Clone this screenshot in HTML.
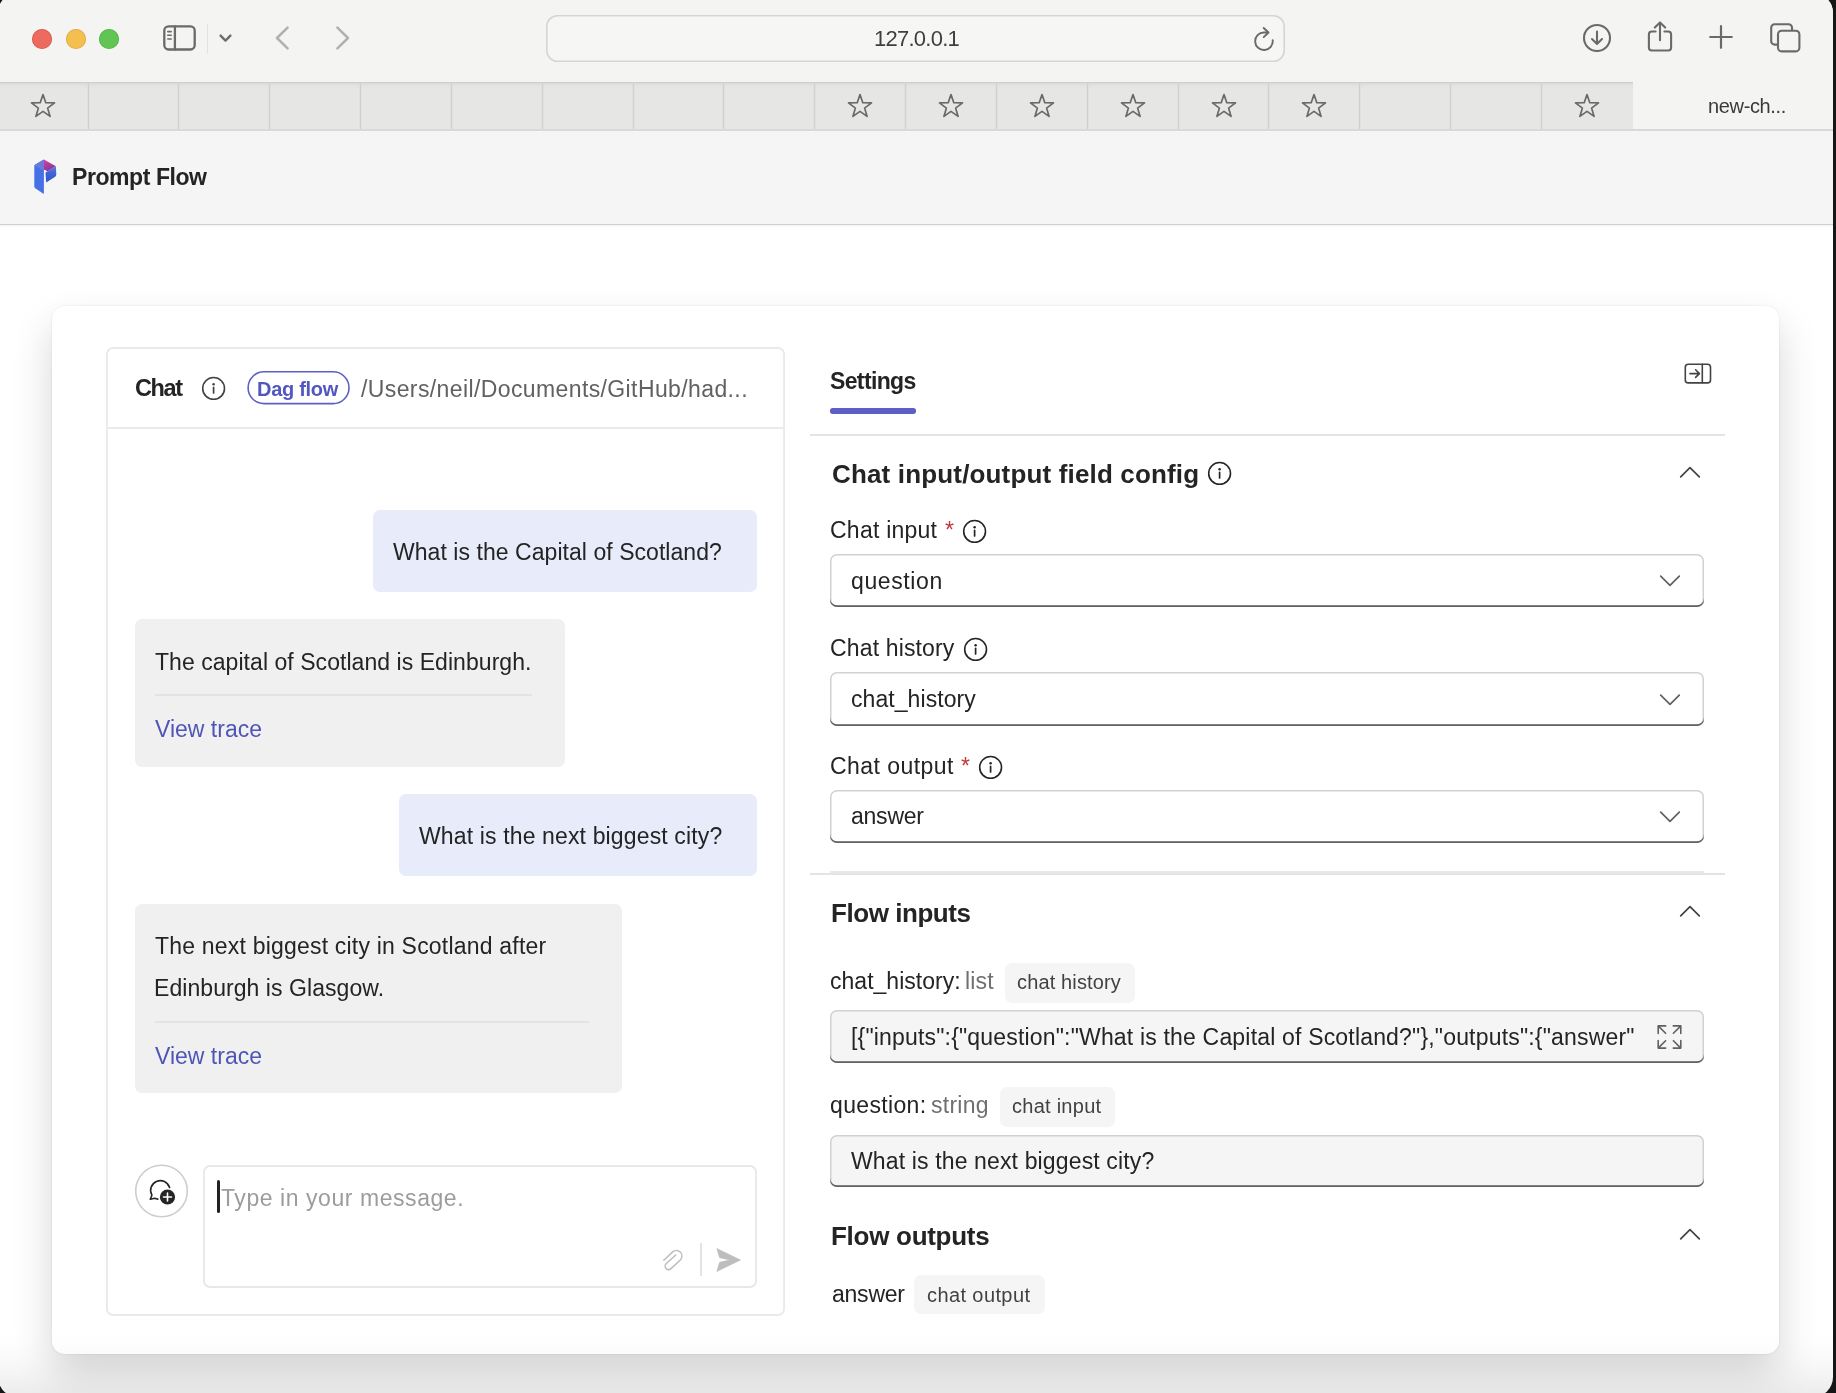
<!DOCTYPE html>
<html lang="en">
<head>
<meta charset="utf-8">
<title>new-chat</title>
<style>
*{box-sizing:border-box;margin:0;padding:0}
html,body{width:1836px;height:1393px;overflow:hidden;background:#161616}
body{font-family:"Liberation Sans",sans-serif;color:#242424;position:relative}
.abs{position:absolute}
#win{position:absolute;left:-2px;top:-7px;width:1834.6px;height:1404px;border-radius:20px;overflow:hidden;background:#fff}
#winin{position:absolute;left:2px;top:7px;width:1836px;height:1393px}
#toolbar{position:absolute;left:0;top:0;width:1836px;height:83px;background:#f4f4f2}
#tabbar{position:absolute;left:0;top:82px;width:1836px;height:49px;background:linear-gradient(#d9d9d8 0,#e2e2e1 2px,#e6e6e5 5px);border-top:1px solid #cecece;border-bottom:2px solid #d9d9d8}
.tsep{position:absolute;top:0;width:1px;height:46px;background:#d0d0cf;box-shadow:0 0 0 .3px #d8d8d7}
#acttab{position:absolute;left:1632.5px;top:-1.5px;width:210px;height:47.5px;background:#f4f4f2}
#apphead{position:absolute;left:0;top:131px;width:1836px;height:94px;background:#f5f5f5;border-bottom:1.6px solid #cfcfcf;box-shadow:0 1px 2px rgba(0,0,0,.06)}
.t{position:absolute;white-space:pre;line-height:30px;font-size:23px;will-change:transform}
.b{font-weight:700}
svg{position:absolute;overflow:visible}

#card{position:absolute;left:52px;top:305.5px;width:1727px;height:1048.5px;border-radius:13px;background:#fff;box-shadow:0 0 3px rgba(0,0,0,.08),0 20px 40px rgba(0,0,0,.16)}
#chat{position:absolute;left:106px;top:347px;width:679.2px;height:969.4px;box-shadow:inset 0 0 0 1.9px #eaeaea;border-radius:7px;background:#fff}
.bub{position:absolute;border-radius:7px}
.bub.u{background:#e8ebfa}
.bub.a{background:#f0f0f0}
.lk{color:#4f55b5}
.hr{position:absolute;height:2px;background:#e4e4e4}
.sel,.inp{position:absolute;left:830px;width:874px;height:53.6px;box-shadow:inset 0 -1.8px 0 0 #616161,inset 0 0 0 1.5px #d1d1d1;border-radius:7px;background:#fff}
.inp{background:#f5f5f5;height:52.6px}
.bdg{position:absolute;border-radius:7px;background:#f5f5f5}
.t.s{font-size:20px;color:#424242}
</style>
</head>
<body>
<div id="win"><div id="winin">

<!-- ======= Safari toolbar ======= -->
<div id="toolbar">
  <div class="abs" style="left:32px;top:29px;width:20px;height:20px;border-radius:50%;background:#ec6a5e;box-shadow:inset 0 0 0 .8px rgba(180,60,50,.45)"></div>
  <div class="abs" style="left:65.6px;top:29px;width:20px;height:20px;border-radius:50%;background:#f4bf4f;box-shadow:inset 0 0 0 .8px rgba(190,140,40,.45)"></div>
  <div class="abs" style="left:99.2px;top:29px;width:20px;height:20px;border-radius:50%;background:#61c554;box-shadow:inset 0 0 0 .8px rgba(60,150,50,.45)"></div>
  <!-- sidebar icon -->
  <svg style="left:163px;top:25px" width="33" height="26" viewBox="0 0 33 26" fill="none" stroke="#6a6a6a" stroke-width="2.3" stroke-linecap="round">
    <rect x="1.3" y="1.3" width="30.4" height="23.2" rx="4.2"/>
    <path d="M11.9 1.4V24.6" />
    <path d="M4.8 6.6H8.2M4.8 10.3H8.2M4.8 14H8.2" stroke-width="1.6"/>
  </svg>
  <div class="abs" style="left:207px;top:24px;width:1.4px;height:29.5px;background:#e3e3e1"></div>
  <svg style="left:219px;top:34px" width="13" height="9" viewBox="0 0 13 9" fill="none" stroke="#6e6e6e" stroke-width="2.4" stroke-linecap="round" stroke-linejoin="round"><path d="M1.6 1.6L6.5 6.6L11.4 1.6"/></svg>
  <svg style="left:275px;top:26px" width="15" height="24" viewBox="0 0 15 24" fill="none" stroke="#b0b0ae" stroke-width="2.5" stroke-linecap="round" stroke-linejoin="round"><path d="M12.6 1.6L2 12L12.6 22.4"/></svg>
  <svg style="left:335px;top:26px" width="15" height="24" viewBox="0 0 15 24" fill="none" stroke="#b0b0ae" stroke-width="2.5" stroke-linecap="round" stroke-linejoin="round"><path d="M2.4 1.6L13 12L2.4 22.4"/></svg>
  <!-- URL field -->
  <div class="abs" style="left:546px;top:15px;width:739px;height:47px;box-shadow:inset 0 0 0 1.6px #d5d5d3;border-radius:11.5px;background:#f6f6f5"></div>
  <div class="t" style="left:874.4px;top:24px;font-size:22px;letter-spacing:-.75px;color:#3f3f3f">127.0.0.1</div>
  <!-- reload -->
  <svg style="left:1252px;top:27px" width="24" height="26" viewBox="0 0 24 26" fill="none" stroke="#6a6a6a" stroke-width="1.9" stroke-linecap="round" stroke-linejoin="round">
    <path d="M20.7 13.3A8.8 8.8 0 1 1 11.9 5.45H16"/>
    <path d="M11.7 1L16.5 5.45L11.7 10.1"/>
  </svg>
  <!-- download -->
  <svg style="left:1582px;top:23px" width="30" height="30" viewBox="0 0 30 30" fill="none" stroke="#6a6a6a" stroke-width="2.1" stroke-linecap="round" stroke-linejoin="round">
    <circle cx="15" cy="15" r="13"/>
    <path d="M15 8.6V20.8M10 16L15 21L20 16"/>
  </svg>
  <!-- share -->
  <svg style="left:1646px;top:19px" width="28" height="34" viewBox="0 0 28 34" fill="none" stroke="#6a6a6a" stroke-width="2.1" stroke-linecap="round" stroke-linejoin="round">
    <path d="M9.6 12.5H5.8a2.9 2.9 0 0 0-2.9 2.9V28.6a2.9 2.9 0 0 0 2.9 2.9H22.2a2.9 2.9 0 0 0 2.9-2.9V15.4a2.9 2.9 0 0 0-2.9-2.9H18.4"/>
    <path d="M14 21.2V3.8M8.8 8.6L14 3.4L19.2 8.6"/>
  </svg>
  <!-- plus -->
  <svg style="left:1709px;top:25.4px" width="24" height="24" viewBox="0 0 24 24" fill="none" stroke="#6a6a6a" stroke-width="2.2" stroke-linecap="round"><path d="M12 1.2V22.8M1.2 12H22.8"/></svg>
  <!-- tabs -->
  <svg style="left:1769px;top:22px" width="32" height="31" viewBox="0 0 32 31" fill="none" stroke="#6a6a6a" stroke-width="2.1" stroke-linejoin="round">
    <path d="M8.6 22.6H5.6a3.4 3.4 0 0 1-3.4-3.4V5.6A3.4 3.4 0 0 1 5.6 2.2H19.6A3.4 3.4 0 0 1 23 5.6V8.6"/>
    <rect x="9" y="8.8" width="21.4" height="20.6" rx="3.6"/>
  </svg>
</div>

<!-- ======= Tab bar ======= -->
<div id="tabbar">
  <div id="acttab"></div>
  <div class="tsep" style="left:87.5px"></div>
  <div class="tsep" style="left:178.3px"></div>
  <div class="tsep" style="left:269.2px"></div>
  <div class="tsep" style="left:360.0px"></div>
  <div class="tsep" style="left:450.8px"></div>
  <div class="tsep" style="left:541.6px"></div>
  <div class="tsep" style="left:632.5px"></div>
  <div class="tsep" style="left:723.3px"></div>
  <div class="tsep" style="left:814.1px"></div>
  <div class="tsep" style="left:905.0px"></div>
  <div class="tsep" style="left:995.8px"></div>
  <div class="tsep" style="left:1086.6px"></div>
  <div class="tsep" style="left:1177.5px"></div>
  <div class="tsep" style="left:1268.3px"></div>
  <div class="tsep" style="left:1359.1px"></div>
  <div class="tsep" style="left:1450.0px"></div>
  <div class="tsep" style="left:1540.8px"></div>
  <svg style="left:29.8px;top:10.2px" width="26" height="26" viewBox="0 0 26 26"><path d="M13.0 1.5L15.8 9.7L24.5 9.9L17.6 15.1L20.1 23.4L13.0 18.4L5.9 23.4L8.4 15.1L1.5 9.9L10.2 9.7Z" fill="none" stroke="#6a6a6a" stroke-width="1.7" stroke-linejoin="round"/></svg>
  <svg style="left:847.3px;top:10.2px" width="26" height="26" viewBox="0 0 26 26"><path d="M13.0 1.5L15.8 9.7L24.5 9.9L17.6 15.1L20.1 23.4L13.0 18.4L5.9 23.4L8.4 15.1L1.5 9.9L10.2 9.7Z" fill="none" stroke="#6a6a6a" stroke-width="1.7" stroke-linejoin="round"/></svg>
  <svg style="left:938.1px;top:10.2px" width="26" height="26" viewBox="0 0 26 26"><path d="M13.0 1.5L15.8 9.7L24.5 9.9L17.6 15.1L20.1 23.4L13.0 18.4L5.9 23.4L8.4 15.1L1.5 9.9L10.2 9.7Z" fill="none" stroke="#6a6a6a" stroke-width="1.7" stroke-linejoin="round"/></svg>
  <svg style="left:1028.9px;top:10.2px" width="26" height="26" viewBox="0 0 26 26"><path d="M13.0 1.5L15.8 9.7L24.5 9.9L17.6 15.1L20.1 23.4L13.0 18.4L5.9 23.4L8.4 15.1L1.5 9.9L10.2 9.7Z" fill="none" stroke="#6a6a6a" stroke-width="1.7" stroke-linejoin="round"/></svg>
  <svg style="left:1119.8px;top:10.2px" width="26" height="26" viewBox="0 0 26 26"><path d="M13.0 1.5L15.8 9.7L24.5 9.9L17.6 15.1L20.1 23.4L13.0 18.4L5.9 23.4L8.4 15.1L1.5 9.9L10.2 9.7Z" fill="none" stroke="#6a6a6a" stroke-width="1.7" stroke-linejoin="round"/></svg>
  <svg style="left:1210.6px;top:10.2px" width="26" height="26" viewBox="0 0 26 26"><path d="M13.0 1.5L15.8 9.7L24.5 9.9L17.6 15.1L20.1 23.4L13.0 18.4L5.9 23.4L8.4 15.1L1.5 9.9L10.2 9.7Z" fill="none" stroke="#6a6a6a" stroke-width="1.7" stroke-linejoin="round"/></svg>
  <svg style="left:1301.4px;top:10.2px" width="26" height="26" viewBox="0 0 26 26"><path d="M13.0 1.5L15.8 9.7L24.5 9.9L17.6 15.1L20.1 23.4L13.0 18.4L5.9 23.4L8.4 15.1L1.5 9.9L10.2 9.7Z" fill="none" stroke="#6a6a6a" stroke-width="1.7" stroke-linejoin="round"/></svg>
  <svg style="left:1573.9px;top:10.2px" width="26" height="26" viewBox="0 0 26 26"><path d="M13.0 1.5L15.8 9.7L24.5 9.9L17.6 15.1L20.1 23.4L13.0 18.4L5.9 23.4L8.4 15.1L1.5 9.9L10.2 9.7Z" fill="none" stroke="#6a6a6a" stroke-width="1.7" stroke-linejoin="round"/></svg>
  <div class="t" style="left:1708px;top:7.5px;font-size:20px;letter-spacing:-.35px;color:#3a3a3a">new-ch...</div>

</div>

<!-- ======= App header ======= -->
<div id="apphead">
  <svg style="left:30px;top:24px" width="32" height="44" viewBox="0 0 32 44">
    <defs>
      <linearGradient id="lgp" x1="0" y1="0" x2="0.4" y2="1"><stop offset="0" stop-color="#dc3fa2"/><stop offset="1" stop-color="#84389a"/></linearGradient>
      <linearGradient id="lgb" x1="0" y1="0" x2="0" y2="1"><stop offset="0" stop-color="#6278de"/><stop offset=".45" stop-color="#3f62d4"/><stop offset="1" stop-color="#2d59cf"/></linearGradient>
    </defs>
    <path d="M13.9 4.6L5.4 9.5Q4.3 10.2 4.3 11.6V31.4Q4.3 32.6 5.3 33.3L13 38.6Q13.9 39.1 13.9 38V4.6Z" fill="#4570e6"/>
    <path d="M13.9 4.6L5.4 9.5Q4.6 10 4.4 10.8L13.9 15.4Z" fill="#6b79d9"/>
    <path d="M13.9 4.6L25.9 11.3L17.6 16.3L13.9 14.5Z" fill="url(#lgp)"/>
    <path d="M25.9 11.3L26.3 19.6Q26.3 21 25.2 21.8L16.2 27.4L15.5 18.6Q15.4 17.6 16.2 17.1L17.6 16.3Z" fill="url(#lgb)"/>
  </svg>
  <div class="t b" style="left:71.8px;top:30.9px;letter-spacing:-.43px;color:#242424">Prompt Flow</div>
</div>

<!-- ======= Page ======= -->
<div id="card"></div>

<!-- Chat panel -->
<div id="chat">
  <div class="abs" style="left:0;top:80px;width:100%;height:2px;background:#ebebeb"></div>
</div>
<div class="t b" style="left:135px;top:373.4px;font-size:23.5px;letter-spacing:-1.4px">Chat</div>
<svg class="info" style="left:201px;top:376px" width="25" height="25" viewBox="0 0 25 25"><circle cx="12.6" cy="12.4" r="10.9" fill="none" stroke="#424242" stroke-width="1.6"/><circle cx="12.6" cy="8.3" r="1.25" fill="#424242"/><path d="M12.6 11.4V17" stroke="#424242" stroke-width="1.7" stroke-linecap="round"/></svg>
<svg style="left:246px;top:370px" width="106" height="36" viewBox="0 0 106 36"><rect x="2.1" y="1.8" width="100.9" height="31.8" rx="15.9" fill="#fff" stroke="#5b5fc7" stroke-width="1.6"/></svg>
<div class="t b" style="left:257px;top:374.1px;font-size:20px;letter-spacing:-.29px;color:#5257c0">Dag flow</div>
<div class="t" style="left:360.8px;top:373.5px;letter-spacing:.39px;color:#616161">/Users/neil/Documents/GitHub/had...</div>

<div class="bub u" style="left:373.4px;top:509.7px;width:383.5px;height:82px"></div>
<div class="t" style="left:393.3px;top:536.5px;letter-spacing:.05px">What is the Capital of Scotland?</div>

<div class="bub a" style="left:134.7px;top:619px;width:430.4px;height:147.6px"></div>
<div class="t" style="left:154.8px;top:646.5px;letter-spacing:.05px">The capital of Scotland is Edinburgh.</div>
<div class="abs" style="left:155px;top:694.4px;width:376.6px;height:2px;background:#e3e3e3"></div>
<div class="t lk" style="left:155.2px;top:714px">View trace</div>

<div class="bub u" style="left:398.9px;top:794px;width:358px;height:82px"></div>
<div class="t" style="left:418.8px;top:820.5px;letter-spacing:.14px">What is the next biggest city?</div>

<div class="bub a" style="left:134.7px;top:903.6px;width:487.6px;height:189.1px"></div>
<div class="t" style="left:154.8px;top:931.3px;letter-spacing:.2px">The next biggest city in Scotland after</div>
<div class="t" style="left:154px;top:973.3px;letter-spacing:.06px">Edinburgh is Glasgow.</div>
<div class="abs" style="left:155px;top:1020.8px;width:433.8px;height:2px;background:#e3e3e3"></div>
<div class="t lk" style="left:155.2px;top:1041.3px">View trace</div>

<!-- new chat button -->
<svg style="left:133px;top:1163px" width="57" height="57" viewBox="0 0 57 57"><circle cx="28.5" cy="28" r="25.8" fill="#fff" stroke="#cdcdcd" stroke-width="1.6"/></svg>
<svg style="left:145px;top:1175px" width="34" height="34" viewBox="0 0 34 34" fill="none">
  <path d="M24.6 12.6A9.7 9.7 0 1 0 6.9 20.2L5.3 24.3L9.6 23.2Q11.2 23.9 12.8 24.1" stroke="#242424" stroke-width="1.6" stroke-linecap="round" stroke-linejoin="round"/>
  <circle cx="22.5" cy="22" r="7.6" fill="#242424"/>
  <path d="M22.5 18V26M18.5 22H26.5" stroke="#fff" stroke-width="1.6" stroke-linecap="round"/>
</svg>
<!-- input box -->
<div class="abs" style="left:202.6px;top:1164.7px;width:554px;height:122.9px;box-shadow:inset 0 0 0 1.9px #e8e8e8;border-radius:7px;background:#fff"></div>
<div class="abs" style="left:217px;top:1179.5px;width:3.4px;height:33.2px;border-radius:1.7px;background:#222"></div>
<div class="t" style="left:221px;top:1182.8px;letter-spacing:.56px;color:#9c9c9c">Type in your message.</div>
<svg style="left:660px;top:1246px" width="26" height="28" viewBox="0 0 26 28" fill="none" stroke="#bdbdbd" stroke-width="1.5" stroke-linecap="round" stroke-linejoin="round"><path d="M3.8 14.2L12.6 5.9A5.6 5.6 0 0 1 20.6 13.7L11 22.6A3.4 3.4 0 0 1 6.1 17.8L15.8 9.0"/></svg>
<div class="abs" style="left:700px;top:1243.1px;width:2px;height:33.4px;background:#e3e3e3"></div>
<svg style="left:714px;top:1246px" width="30" height="28" viewBox="0 0 30 28"><path d="M2.8 2.5L26.5 13.9L2.8 25.5L5.6 16.2L15.7 13.9L5.6 11.7Z" fill="#bdbdbd" stroke="#bdbdbd" stroke-width=".6" stroke-linejoin="round"/></svg>

<!-- Settings panel -->
<div class="t b" style="left:829.9px;top:365.5px;letter-spacing:-.63px">Settings</div>
<div class="abs" style="left:830px;top:408.4px;width:86px;height:5.3px;border-radius:2.7px;background:#5b5fc7"></div>
<svg style="left:1683px;top:362px" width="30" height="24" viewBox="0 0 30 24" fill="none" stroke="#424242" stroke-width="1.6" stroke-linecap="round" stroke-linejoin="round">
  <rect x="2.3" y="2.3" width="25.2" height="18.6" rx="3"/>
  <path d="M19.3 2.4V20.8"/>
  <path d="M7 11.6H16M12.6 7.8L16.4 11.6L12.6 15.4"/>
</svg>
<div class="hr" style="left:809.5px;top:434px;width:915.3px"></div>

<div class="t b" style="left:831.5px;top:458.5px;font-size:26px;letter-spacing:.16px">Chat input/output field config</div>
<svg class="info" style="left:1207.3px;top:460.8px" width="25" height="25" viewBox="0 0 25 25"><circle cx="12.6" cy="12.4" r="10.9" fill="none" stroke="#242424" stroke-width="1.6"/><circle cx="12.6" cy="8.3" r="1.25" fill="#242424"/><path d="M12.6 11.4V17" stroke="#242424" stroke-width="1.7" stroke-linecap="round"/></svg>
<svg class="chu" style="left:1677.6px;top:464.6px" width="24" height="14" viewBox="0 0 24 14"><path d="M2.7 11.8L12 2.7L21.3 11.8" fill="none" stroke="#424242" stroke-width="1.7" stroke-linecap="round" stroke-linejoin="round"/></svg>

<div class="t" style="left:829.9px;top:515.3px;letter-spacing:.24px">Chat input</div>
<div class="t" style="left:945.4px;top:515.3px;color:#c4383a">*</div>
<svg class="info" style="left:961.7px;top:519.1px" width="25" height="25" viewBox="0 0 25 25"><circle cx="12.6" cy="12.4" r="10.9" fill="none" stroke="#242424" stroke-width="1.6"/><circle cx="12.6" cy="8.3" r="1.25" fill="#242424"/><path d="M12.6 11.4V17" stroke="#242424" stroke-width="1.7" stroke-linecap="round"/></svg>
<div class="sel" style="top:553.6px"></div>
<div class="t" style="left:851.4px;top:565.5px;letter-spacing:.62px">question</div>
<svg class="chd" style="left:1657.5px;top:574.4px" width="24" height="14" viewBox="0 0 24 14"><path d="M2.7 2.2L12 11.3L21.3 2.2" fill="none" stroke="#616161" stroke-width="1.7" stroke-linecap="round" stroke-linejoin="round"/></svg>

<div class="t" style="left:829.9px;top:632.8px;letter-spacing:.15px">Chat history</div>
<svg class="info" style="left:963.3px;top:637.1px" width="25" height="25" viewBox="0 0 25 25"><circle cx="12.6" cy="12.4" r="10.9" fill="none" stroke="#242424" stroke-width="1.6"/><circle cx="12.6" cy="8.3" r="1.25" fill="#242424"/><path d="M12.6 11.4V17" stroke="#242424" stroke-width="1.7" stroke-linecap="round"/></svg>
<div class="sel" style="top:672px"></div>
<div class="t" style="left:851.4px;top:683.5px;letter-spacing:.07px">chat_history</div>
<svg class="chd" style="left:1657.5px;top:692.8px" width="24" height="14" viewBox="0 0 24 14"><path d="M2.7 2.2L12 11.3L21.3 2.2" fill="none" stroke="#616161" stroke-width="1.7" stroke-linecap="round" stroke-linejoin="round"/></svg>

<div class="t" style="left:829.9px;top:751px;letter-spacing:.45px">Chat output</div>
<div class="t" style="left:960.5px;top:751px;color:#c4383a">*</div>
<svg class="info" style="left:978.3px;top:754.8px" width="25" height="25" viewBox="0 0 25 25"><circle cx="12.6" cy="12.4" r="10.9" fill="none" stroke="#242424" stroke-width="1.6"/><circle cx="12.6" cy="8.3" r="1.25" fill="#242424"/><path d="M12.6 11.4V17" stroke="#242424" stroke-width="1.7" stroke-linecap="round"/></svg>
<div class="sel" style="top:789.6px"></div>
<div class="t" style="left:851.4px;top:801px;letter-spacing:-.23px">answer</div>
<svg class="chd" style="left:1657.5px;top:810.4px" width="24" height="14" viewBox="0 0 24 14"><path d="M2.7 2.2L12 11.3L21.3 2.2" fill="none" stroke="#616161" stroke-width="1.7" stroke-linecap="round" stroke-linejoin="round"/></svg>

<div class="abs" style="left:830px;top:871px;width:874px;height:2px;background:#e9e9e9"></div>
<div class="hr" style="left:809.5px;top:873px;width:915.3px"></div>

<div class="t b" style="left:830.9px;top:897.9px;font-size:26px;letter-spacing:-.45px">Flow inputs</div>
<svg class="chu" style="left:1677.6px;top:904px" width="24" height="14" viewBox="0 0 24 14"><path d="M2.7 11.8L12 2.7L21.3 11.8" fill="none" stroke="#424242" stroke-width="1.7" stroke-linecap="round" stroke-linejoin="round"/></svg>

<div class="t" style="left:830px;top:966px;letter-spacing:.02px">chat_history:</div>
<div class="t" style="left:965.2px;top:966px;letter-spacing:.17px;color:#707070">list</div>
<div class="bdg" style="left:1004.8px;top:962.6px;width:130.7px;height:40px"></div>
<div class="t s" style="left:1017.1px;top:967.1px;letter-spacing:.14px">chat history</div>
<div class="inp" style="top:1010.3px"></div>
<div class="t" style="left:850.9px;top:1021.7px;letter-spacing:.18px;width:785.2px;overflow:hidden">[{"inputs":{"question":"What is the Capital of Scotland?"},"outputs":{"answer":"The capital of Scotland is Edinburgh."}}]</div>
<svg style="left:1655px;top:1022.5px" width="29" height="28" viewBox="0 0 29 28" fill="none" stroke="#616161" stroke-width="1.6" stroke-linecap="round" stroke-linejoin="round">
  <path d="M3.2 10.4V2.9H10.7M3.4 3.1L10.6 10.3"/>
  <path d="M18.3 2.9H25.8V10.4M25.6 3.1L18.4 10.3"/>
  <path d="M3.2 17.6V25.1H10.7M3.4 24.9L10.6 17.7"/>
  <path d="M18.3 25.1H25.8V17.6M25.6 24.9L18.4 17.7"/>
</svg>

<div class="t" style="left:830px;top:1090px;letter-spacing:.35px">question:</div>
<div class="t" style="left:931.3px;top:1090px;letter-spacing:.26px;color:#707070">string</div>
<div class="bdg" style="left:999.6px;top:1087px;width:115.8px;height:40px"></div>
<div class="t s" style="left:1012.2px;top:1091.1px;letter-spacing:.26px">chat input</div>
<div class="inp" style="top:1134.5px"></div>
<div class="t" style="left:851.4px;top:1145.9px;letter-spacing:.14px">What is the next biggest city?</div>

<div class="t b" style="left:830.9px;top:1220.7px;font-size:26px;letter-spacing:-.28px">Flow outputs</div>
<svg class="chu" style="left:1677.6px;top:1226.8px" width="24" height="14" viewBox="0 0 24 14"><path d="M2.7 11.8L12 2.7L21.3 11.8" fill="none" stroke="#424242" stroke-width="1.7" stroke-linecap="round" stroke-linejoin="round"/></svg>

<div class="t" style="left:832.3px;top:1278.9px;letter-spacing:-.23px">answer</div>
<div class="bdg" style="left:913.8px;top:1275.4px;width:130.8px;height:39px"></div>
<div class="t s" style="left:926.7px;top:1280px;letter-spacing:.4px">chat output</div>

<!-- bottom shade -->
<div class="abs" style="left:0;top:1325px;width:1836px;height:68px;background:linear-gradient(to bottom,rgba(0,0,0,0) 0,rgba(0,0,0,.005) 25%,rgba(0,0,0,.019) 50%,rgba(0,0,0,.042) 75%,rgba(0,0,0,.075) 100%);pointer-events:none"></div>

</div></div>
</body>
</html>
